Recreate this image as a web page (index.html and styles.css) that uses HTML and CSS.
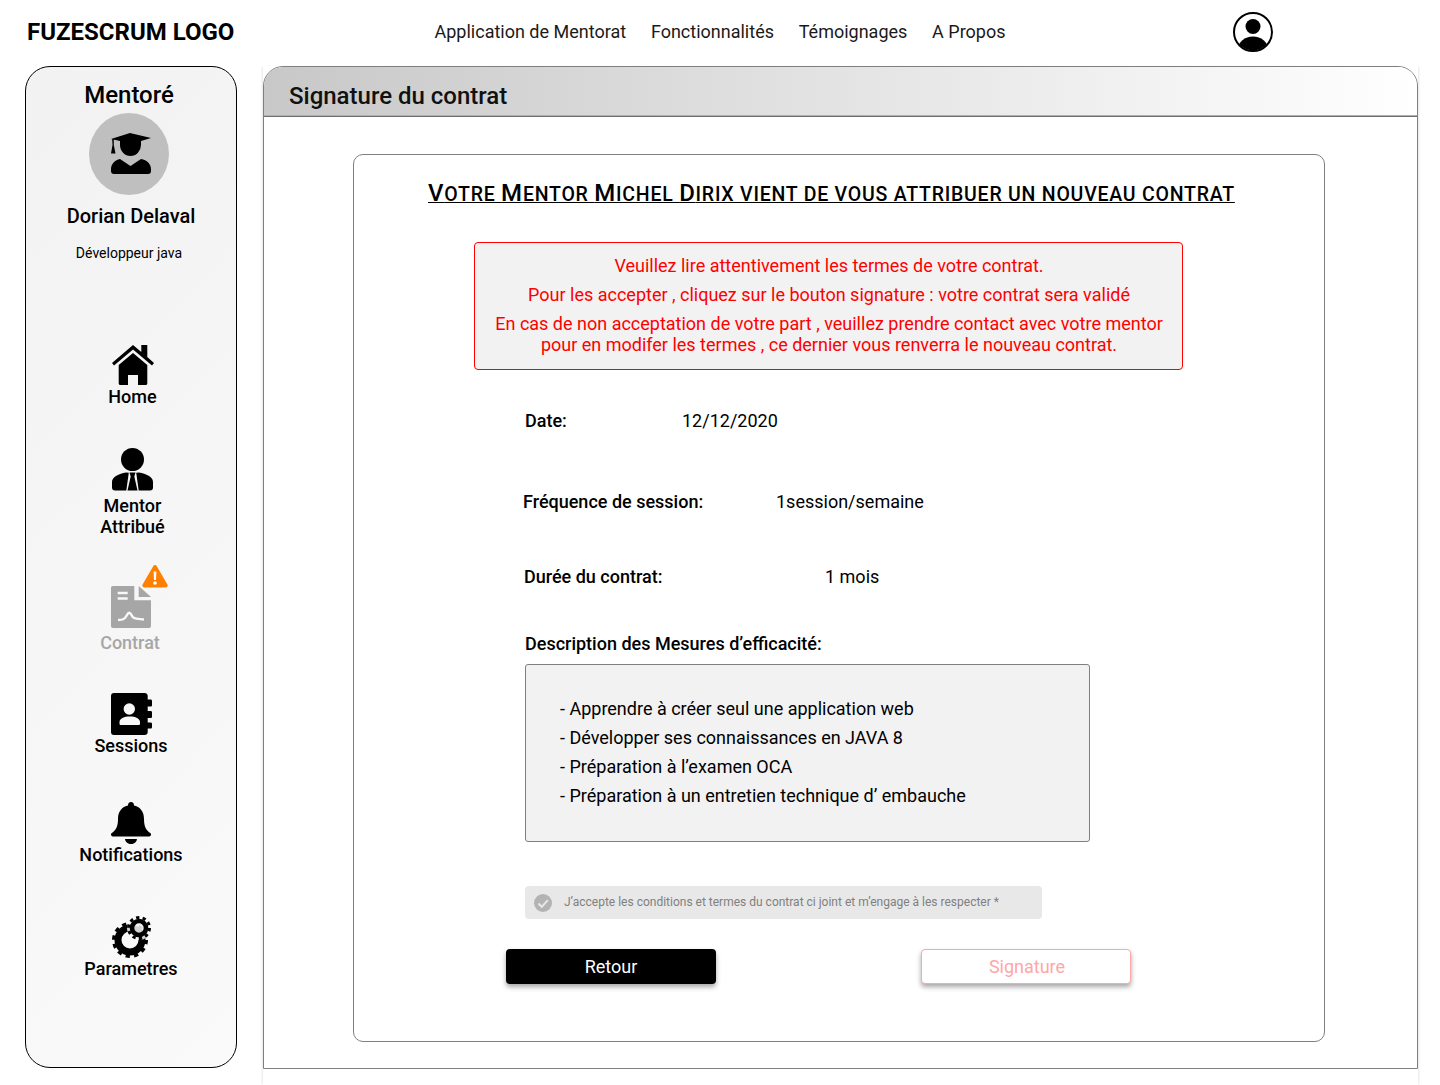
FILE: index.html
```html
<!DOCTYPE html>
<html lang="fr">
<head>
<meta charset="utf-8">
<title>Signature du contrat</title>
<link rel="stylesheet" href="styles.css">
</head>
<body>

<header class="topbar">
    <div class="logo">FUZESCRUM LOGO</div>
    <nav class="topnav">
        <a>Application de Mentorat</a>
        <a>Fonctionnalités</a>
        <a>Témoignages</a>
        <a>A Propos</a>
    </nav>
    <svg class="account" viewBox="0 0 40 40">
        <defs><clipPath id="accountClip"><circle cx="20" cy="20" r="18.400"/></clipPath></defs>
        <circle cx="20" cy="20" r="19" fill="none" stroke="#000" stroke-width="2"/>
        <circle cx="20" cy="14.500" r="7.500"/>
        <ellipse cx="20" cy="37" rx="15" ry="12.500" clip-path="url(#accountClip)"/>
    </svg>
</header>

<div class="layout">
    <aside class="sidebar">
        <div class="role">Mentoré</div>
        <div class="avatar">
            <svg viewBox="0 0 40 42" width="40" height="42">
                <path d="M19 0 40 5 30 8H9L0 6Z"/>
                <path d="M9 7H30V12A10.500 11 0 0 1 9 12Z"/>
                <path d="M1.200 6H2.800V12L4.500 20.500H0L1.500 12Z"/>
                <path d="M9 26 19.500 33 30 26C36 27 40 31 40 36V38C40 40 39 41 37 41H3C1 41 0 40 0 38V36C0 31 4 27 9 26Z"/>
            </svg>
        </div>
        <div class="person">Dorian Delaval</div>
        <div class="job">Développeur java</div>

        <a class="side-item side-home">
            <svg viewBox="0 0 42 40" width="42" height="40">
                <path d="M21 0 29.300 7V0H35.300V12L42 18 40 20.500 21 4.500 2 20.500 0 18Z"/>
                <path fill-rule="evenodd" d="M21 8 35.300 20V38C35.300 39.500 34.800 40 33.300 40H26V30H16V40H8.700C7.200 40 6.700 39.500 6.700 38V20Z"/>
            </svg>
            <span>Home</span>
        </a>
        <a class="side-item side-mentor">
            <svg viewBox="0 0 41 43" width="41" height="43">
                <circle cx="20.500" cy="11.500" r="11.500"/>
                <path d="M14 24.500 16.800 24.800 14.300 42.500H3C1 42.500 0 41.500 0 39.500V34C0 28.500 7 25.800 14 24.500Z"/>
                <path d="M27 24.500C34 25.800 41 28.500 41 34V39.500C41 41.500 40 42.500 38 42.500H26.700L24.200 24.800Z"/>
                <path d="M17.500 24.500H23.500L22.300 28.500 25.500 42.500H15.500L18.700 28.500Z"/>
            </svg>
            <span>Mentor<br>Attribué</span>
        </a>
        <a class="side-item side-contract">
            <span class="icon-wrap">
                <svg viewBox="0 0 40 42" width="40" height="42">
                    <path d="M2 0H23.300V14.300H40V40C40 41.200 39.200 42 38 42H2C.8 42 0 41.200 0 40V2C0 .8.8 0 2 0Z"/>
                    <path d="M27.700 0 40 11H27.700Z"/>
                    <path class="contract-mark" d="M6.700 7H16.700M6.700 12.500H16.700M7 34C12 34 14 33 16 29 17.500 26 19 26 20.500 29 22 33 25 32.500 33 33.500"/>
                </svg>
                <svg class="warn" viewBox="0 0 26 24" width="26" height="24">
                    <path fill="#ff7f00" d="M13 1C13.800 1 14.400 1.500 14.800 2.200L25.400 20.500C26.200 22 25.200 23.500 23.600 23.500H2.400C.8 23.500-.2 22 .6 20.500L11.200 2.200C11.600 1.500 12.200 1 13 1Z"/>
                    <path fill="#fff" d="M11.600 7.500H14.400L14 16H12ZM13 17.200A1.800 1.800 0 1 1 13 20.800 1.800 1.800 0 1 1 13 17.200Z"/>
                </svg>
            </span>
            <span>Contrat</span>
        </a>
        <a class="side-item side-sessions">
            <svg viewBox="0 0 41 42" width="41" height="42">
                <path fill-rule="evenodd" d="M3 0H33.500C35.500 0 36.700 1 36.700 3V39C36.700 41 35.500 42 33.500 42H3C1 42 0 41 0 39V3C0 1 1 0 3 0ZM18.300 10.300A5.700 5.700 0 1 0 18.300 21.700 5.700 5.700 0 1 0 18.300 10.300ZM8.500 29V30.500C8.500 31.500 9 32 10 32H27.500C28.500 32 29 31.500 29 30.500V29C29 25.500 24.500 23.500 18.800 23.500S8.500 25.500 8.500 29Z"/>
                <path d="M36 6.500H39.500C40.500 6.500 41 7 41 8V12C41 13 40.500 13.500 39.500 13.500H36ZM36 18H39.500C40.500 18 41 18.500 41 19.500V23.500C41 24.500 40.500 25 39.500 25H36ZM36 29.500H39.500C40.500 29.500 41 30 41 31V34C41 35 40.500 35.500 39.500 35.500H36Z"/>
            </svg>
            <span>Sessions</span>
        </a>
        <a class="side-item side-notif">
            <svg viewBox="0 0 40 42" width="40" height="42">
                <path d="M20 0C22 0 23 1.500 23 3.500 30 5 33 10.500 33 17 33 24 35 28 38.500 30.500 40 31.500 40.500 32 40 33 39.500 34 38.500 34.500 37.500 34.500H2.500C1.500 34.500 .5 34 0 33-.5 32 0 31.500 1.500 30.500 5 28 7 24 7 17 7 10.500 10 5 17 3.500 17 1.500 18 0 20 0Z"/>
                <path d="M14 37H26C25.500 40.500 23 42 20 42S14.500 40.500 14 37Z"/>
            </svg>
            <span>Notifications</span>
        </a>
        <a class="side-item side-settings">
            <svg viewBox="0 0 40 42" width="40" height="42">
                <circle cx="18" cy="24" r="12" fill="none" stroke="#000" stroke-width="7"/>
                <circle cx="18" cy="24" r="16.500" fill="none" stroke="#000" stroke-width="3" stroke-dasharray="4.320 4.320"/>
                <circle cx="27" cy="12" r="12" fill="#f8f8f8" fill-opacity="0.85"/>
                <circle cx="27" cy="12" r="7" fill="none" stroke="#000" stroke-width="4.600"/>
                <circle cx="27" cy="12" r="10.500" fill="none" stroke="#000" stroke-width="3" stroke-dasharray="3.300 3.300"/>
            </svg>
            <span>Parametres</span>
        </a>
    </aside>

    <div class="panel-wrap">
        <main class="panel">
            <div class="panel-head">Signature du contrat</div>
            <div class="panel-body">
                <section class="card">
                    <h1 class="card-title"><span class="cap">V</span>otre <span class="cap">M</span>entor <span class="cap">M</span>ichel <span class="cap">D</span>irix vient de vous attribuer un nouveau contrat</h1>

                    <div class="notice">
                        <p>Veuillez lire attentivement les termes de votre contrat.</p>
                        <p>Pour les accepter , cliquez sur le bouton signature : votre contrat sera validé</p>
                        <p>En cas de non acceptation de votre part , veuillez prendre contact avec votre mentor<br>pour en modifer les termes , ce dernier vous renverra le nouveau contrat.</p>
                    </div>

                    <div class="field field-date"><b>Date:</b><span>12/12/2020</span></div>
                    <div class="field field-freq"><b>Fréquence de session:</b><span>1session/semaine</span></div>
                    <div class="field field-length"><b>Durée du contrat:</b><span>1 mois</span></div>

                    <div class="desc-label">Description des Mesures d’efficacité:</div>
                    <div class="desc-box">
                        <p>- Apprendre à créer seul une application web</p>
                        <p>- Développer ses connaissances en JAVA 8</p>
                        <p>- Préparation à l’examen OCA</p>
                        <p>- Préparation à un entretien technique d’ embauche</p>
                    </div>

                    <div class="accept">
                        <svg viewBox="0 0 18 18" width="18" height="18">
                            <circle cx="9" cy="9" r="9" fill="#b3b3b3"/>
                            <path d="M4.500 9.500 7.800 12.800 13.800 6.200" fill="none" stroke="#e8e8e8" stroke-width="2"/>
                        </svg>
                        <span>J’accepte les conditions et termes du contrat ci joint et m’engage à les respecter *</span>
                    </div>

                    <div class="actions">
                        <button class="btn btn-back">Retour</button>
                        <button class="btn btn-sign">Signature</button>
                    </div>
                </section>
            </div>
        </main>
    </div>
</div>

</body>
</html>
```

FILE: styles.css
```css
* {
    box-sizing: border-box;
}

html,
body {
    height: 1085px;
    overflow: hidden;
}

body {
    margin: 0;
    background-color: white;
    font-family: Roboto, Arial, sans-serif;
    color: black;
}

p {
    margin: 0;
}

/* top bar */
.topbar {
    height: 66px;
    padding-left: 27px;
    padding-bottom: 2px;
    display: flex;
    align-items: center;
}

.logo {
    width: 407.500px;
    font-size: 24px;
    font-weight: 700;
}

.topnav {
    display: flex;
    gap: 24.750px;
    width: 798.500px;
    margin-bottom: 2px;
    font-size: 18px;
    color: #1a1a1a;
}

.account {
    width: 40px;
    height: 40px;
}

.layout {
    display: flex;
    align-items: flex-start;
    padding-left: 25px;
    gap: 26px;
}

/* left column */
.sidebar {
    width: 212px;
    height: 1002px;
    border: 1px solid black;
    border-radius: 25px;
    background: linear-gradient(135deg, #f2f2f2 0%, #fafafa 100%);
    display: flex;
    flex-direction: column;
    align-items: center;
    padding-top: 14px;
}

.role {
    font-size: 24px;
    font-weight: 500;
    line-height: 28px;
    margin-right: 4px;
}

.avatar {
    width: 80px;
    height: 82px;
    margin-top: 4px;
    margin-right: 4px;
    border-radius: 50%;
    background-color: #bfbfbf;
    display: flex;
    align-items: center;
    justify-content: center;
    padding-bottom: 1px;
    padding-left: 4px;
}

.person {
    font-size: 20px;
    font-weight: 500;
    line-height: 24px;
    margin-top: 9px;
}

.job {
    font-size: 14px;
    line-height: 16px;
    margin-top: 17px;
    margin-right: 4px;
}

.side-item {
    display: flex;
    flex-direction: column;
    align-items: center;
    font-size: 18px;
    font-weight: 500;
    line-height: 21px;
    text-align: center;
}

.side-home {
    margin-top: 84px;
    margin-left: 3px;
}

.side-home span {
    margin-top: 1px;
}

.side-mentor {
    margin-top: 41px;
    margin-left: 3px;
}

.side-mentor span {
    margin-top: 4px;
}

.side-contract {
    margin-top: 27px;
    color: #a6a6a6;
}

.side-contract svg {
    display: block;
    fill: #a6a6a6;
}

.side-contract > span:last-child {
    margin-top: 4px;
    margin-right: 2px;
}

.contract-mark {
    fill: none;
    stroke: #f8f8f8;
    stroke-width: 2.400;
}

.icon-wrap {
    position: relative;
    padding-top: 22px;
}

.warn {
    position: absolute;
    top: 0;
    right: -17px;
}

.side-sessions {
    margin-top: 40px;
}

.side-notif {
    margin-top: 46px;
}

.side-settings {
    margin-top: 51px;
}

.side-settings svg {
    margin-left: 2px;
}

/* right panel */
.panel-wrap {
    width: 1155px;
    height: 1019px;
    box-shadow: -2px 0 2px -1px #e6e6e6, 2px 0 2px -1px #e6e6e6;
}

.panel {
    height: 1003px;
    border: 1px solid #7f7f7f;
    border-radius: 20px 20px 0 0;
    background-color: white;
}

.panel-head {
    height: 50px;
    border-bottom: 1px solid #6e6e6e;
    border-radius: 19px 19px 0 0;
    background: linear-gradient(90deg, #c8c8c8 0%, #ffffff 100%);
    font-size: 24px;
    font-weight: 500;
    line-height: 58px;
    padding-left: 25px;
    color: #111;
    box-shadow: inset 0 -1px 0 #b0b0b0;
}

.panel-body {
    padding: 37px 0 0 89px;
}

.card {
    width: 972px;
    height: 888px;
    border: 1px solid #7f7f7f;
    border-radius: 10px;
    padding-top: 24px;
}

.card-title {
    margin: 0 0 0 74px;
    font-size: 19.500px;
    font-weight: 500;
    line-height: 28px;
    letter-spacing: 0.770px;
    text-transform: uppercase;
    text-decoration: underline;
    white-space: nowrap;
}

.cap {
    font-size: 24px;
}

.notice {
    width: 709px;
    height: 128px;
    margin: 33px 0 0 120px;
    border: 1px solid red;
    border-radius: 4px;
    background-color: #f2f2f2;
    color: red;
    font-size: 18px;
    line-height: 21px;
    text-align: center;
    padding-top: 12px;
    padding-left: 1px;
}

.notice p {
    margin-bottom: 8px;
}

.field {
    display: flex;
    font-size: 18px;
    line-height: 21px;
}

.field b {
    font-weight: 500;
}

.field-date {
    margin: 40px 0 0 171px;
}

.field-date b {
    width: 157px;
}

.field-freq {
    margin: 60px 0 0 169px;
}

.field-freq b {
    width: 253px;
}

.field-length {
    margin: 54px 0 0 170px;
}

.field-length b {
    width: 301px;
}

.desc-label {
    margin: 46px 0 0 171px;
    font-size: 18px;
    font-weight: 500;
    line-height: 21px;
}

.desc-box {
    width: 565px;
    height: 178px;
    margin: 10px 0 0 171px;
    border: 1px solid #7f7f7f;
    border-radius: 3px;
    background-color: #f2f2f2;
    font-size: 18px;
    line-height: 21px;
    padding: 33px 0 0 34px;
}

.desc-box p {
    margin-bottom: 8px;
}

.accept {
    width: 517px;
    height: 33px;
    margin: 44px 0 0 171px;
    border-radius: 4px;
    background-color: #e8e8e8;
    display: flex;
    align-items: center;
    gap: 12px;
    padding-left: 9px;
    font-size: 12px;
    color: #808080;
}

.accept span {
    margin-bottom: 2px;
}

.actions {
    display: flex;
    gap: 205px;
    margin: 30px 0 0 152px;
}

.btn {
    width: 210px;
    height: 35px;
    border-radius: 4px;
    font-family: Roboto, Arial, sans-serif;
    font-size: 18px;
    box-shadow: 0 3px 5px rgba(0, 0, 0, 0.35);
}

.btn-back {
    border: none;
    background-color: black;
    color: white;
}

.btn-sign {
    border: 1px solid #ffa6a6;
    background-color: white;
    color: #ffa6a6;
    padding-left: 8px;
}
```
